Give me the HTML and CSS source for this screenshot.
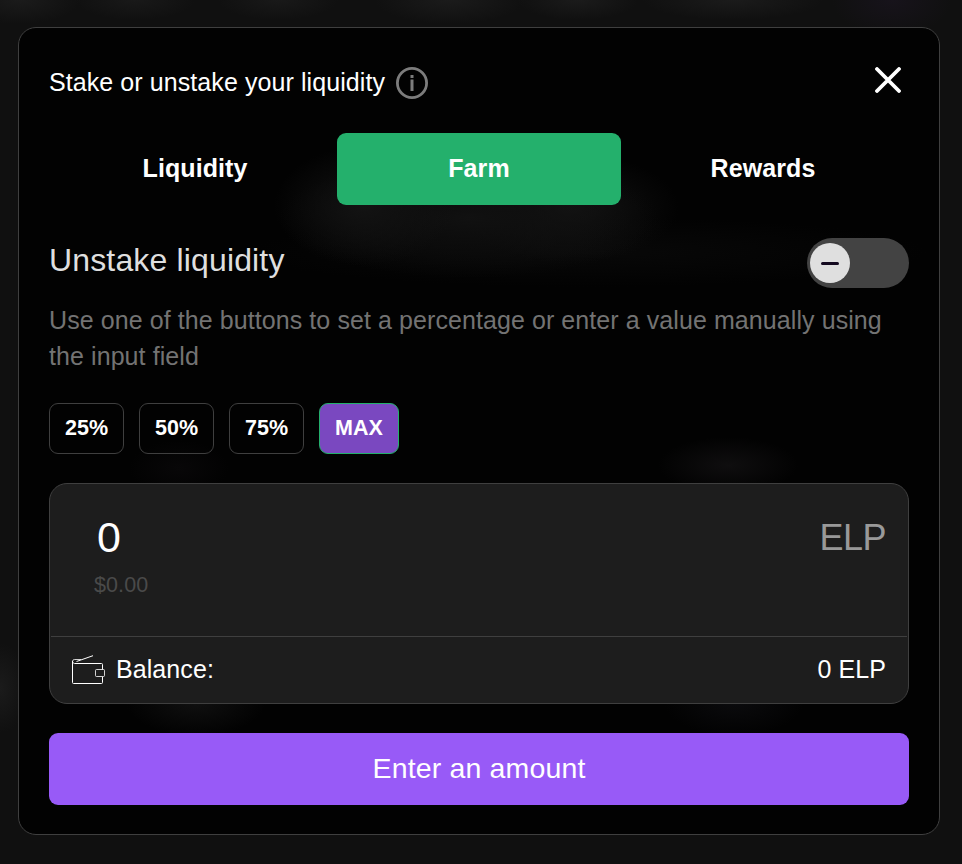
FILE: index.html
```html
<!DOCTYPE html>
<html lang="en">
<head>
  <meta charset="UTF-8" />
  <meta name="viewport" content="width=device-width, initial-scale=1.0"/>
  <title>Farm</title>
  <link rel="stylesheet" href="styles.css">
</head>
<body>

<div class="modal">
  <!-- Header -->
  <div class="modal-header">
    <h1>Stake or unstake your liquidity</h1>
    <svg class="info" width="32" height="32" viewBox="0 0 32 32">
      <circle cx="16" cy="16" r="14.6" fill="none" stroke="#7c7c7c" stroke-width="2.8"/>
      <path d="M14.5 8h3v3h-3zM14.5 12.5h3v11.5h-3z" fill="#7c7c7c"/>
    </svg>
    <button class="close" aria-label="Close">
      <svg width="26" height="26" viewBox="0 0 26 26">
        <path d="M2 2L24 24M24 2L2 24" stroke="#fff" stroke-width="3.8" stroke-linecap="round"/>
      </svg>
    </button>
  </div>

  <!-- Tabs -->
  <div class="tabs">
    <button class="tab">Liquidity</button>
    <button class="tab active">Farm</button>
    <button class="tab">Rewards</button>
  </div>

  <div class="action">
    <h2>Unstake liquidity</h2>
    <div class="toggle">
      <div class="knob"><span class="minus"></span></div>
    </div>
  </div>

  <p class="hint">Use one of the buttons to set a percentage or enter a value manually using the input field</p>

  <div class="percents">
    <button class="percent">25%</button>
    <button class="percent">50%</button>
    <button class="percent">75%</button>
    <button class="percent max">MAX</button>
  </div>

  <!-- Amount -->
  <div class="amount">
    <div class="amount-top">
      <div>
        <div class="value">0</div>
        <div class="usd">$0.00</div>
      </div>
      <div class="token">ELP</div>
    </div>
    <div class="balance">
      <svg class="wallet" width="34" height="30" viewBox="0 0 34 30" fill="none" stroke="#fff" stroke-width="1">
        <path d="M2.5 8.5H29.5Q30.5 8.5 30.5 9.5V14.5M30.5 22V27.5Q30.5 28.5 29.5 28.5H1.5Q.5 28.5 .5 27.5V6"/>
        <path d="M2.5 8.5Q.5 8 .5 6.5Q.5 4.5 2.5 4.5H9" opacity=".8"/>
        <path d="M4.5 6.5L21 .7"/>
        <path d="M24.5 14.500H31.500Q32.500 14.500 32.500 15.500V20.500Q32.500 21.500 31.500 21.500H24.500Q23.500 21.500 23.500 20.500V15.500Q23.500 14.500 24.500 14.500Z" opacity=".8"/>
      </svg>
      <span>Balance:</span>
      <span class="balance-value">0 ELP</span>
    </div>
  </div>

  <button class="submit">Enter an amount</button>
</div>

</body>
</html>
```
FILE: styles.css
```css
* {
  box-sizing: border-box;
}

body {
  margin: 0;
  height: 864px;
  padding: 27px 22px 0 18px;
  font-family: "Liberation Sans", Arial, sans-serif;
  font-size: 25px;
  letter-spacing: 0.08px;
  color: #fff;
  overflow: hidden;
  background:
    radial-gradient(ellipse 60px 24px at 20px 0, #1b1b1b, transparent),
    radial-gradient(ellipse 60px 20px at 135px 0, #191919, transparent),
    radial-gradient(ellipse 60px 20px at 278px 0, #191919, transparent),
    radial-gradient(ellipse 75px 24px at 450px 0, #1b1b1b, transparent),
    radial-gradient(ellipse 60px 20px at 578px 0, #1b1b1b, transparent),
    radial-gradient(ellipse 90px 20px at 733px 0, #1b1b1b, transparent),
    radial-gradient(ellipse 60px 36px at 892px 0, #17131b, transparent),
    radial-gradient(ellipse 28px 45px at 0 688px, #1b1b1b, transparent),
    #101010;
}

h1, h2, p {
  margin: 0;
  font-weight: normal;
}

button {
  padding: 0;
  border: none;
  background: none;
  color: #fff;
  font: inherit;
  letter-spacing: inherit;
}

svg {
  display: block;
}

.modal {
  height: 808px;
  padding: 30px;
  border: 1px solid #3f3f3f;
  border-radius: 18px;
  background:
    radial-gradient(ellipse 90px 60px at 345px 178px, #131313, transparent),
    radial-gradient(ellipse 190px 60px at 450px 190px, #111, transparent),
    radial-gradient(ellipse 110px 55px at 550px 180px, #131313, transparent),
    radial-gradient(ellipse 340px 35px at 570px 224px, #080808, transparent),
    radial-gradient(ellipse 70px 28px at 709px 437px, #0f0e0f, transparent),
    radial-gradient(ellipse 50px 28px at 160px 440px, #080708, transparent),
    radial-gradient(ellipse 70px 34px at 177px 674px, #101010, transparent),
    radial-gradient(ellipse 70px 34px at 715px 674px, #0b0b0d, transparent),
    #020202;
}

.modal-header {
  display: flex;
  align-items: center;
  height: 50px;
}

.modal-header h1 {
  padding-bottom: 1px;
  font-size: 25px;
}

.info {
  margin-left: 11px;
}

.close {
  margin: 0 8px 7px auto;
}

.tabs {
  display: grid;
  grid-template-columns: repeat(3, 284px);
  justify-content: center;
  margin-top: 25px;
}

.tab {
  height: 72px;
  padding-bottom: 2px;
  border-radius: 9px;
  font-weight: bold;
}

.tab.active {
  background: #24b06c;
}

.action {
  display: flex;
  justify-content: space-between;
  margin-top: 33px;
}

.action h2 {
  font-size: 32px;
  line-height: 44px;
  letter-spacing: 0.15px;
  color: #dfdfdf;
}

.toggle {
  width: 102px;
  height: 50px;
  padding: 5px 3px;
  border-radius: 25px;
  background: #434343;
}

.knob {
  display: flex;
  align-items: center;
  justify-content: center;
  width: 40px;
  height: 40px;
  border-radius: 50%;
  background: #dfdfdf;
}

.minus {
  width: 18px;
  height: 3px;
  border-radius: 2px;
  background: #140a20;
}

.hint {
  margin-top: 14px;
  line-height: 36px;
  color: #737373;
}

.percents {
  display: flex;
  gap: 15px;
  margin-top: 29px;
}

.percent {
  width: 75px;
  height: 51px;
  border: 1px solid #3f3f3f;
  border-radius: 9px;
  font-size: 21.5px;
  font-weight: bold;
  letter-spacing: 0;
}

.percent.max {
  width: 80px;
  border-color: #24b06c;
  background: #7a48c0;
}

.amount {
  height: 221px;
  margin-top: 29px;
  padding: 0 1px;
  border: 1px solid #3f3f3f;
  border-radius: 18px;
  background: #1d1d1d;
}

.amount-top {
  display: flex;
  justify-content: space-between;
  height: 153px;
  padding: 30px 21px 0 43px;
  border-bottom: 1px solid #3f3f3f;
}

.value {
  padding-left: 3px;
  font-size: 43px;
  line-height: 46px;
}

.usd {
  margin-top: 12px;
  font-size: 21.5px;
  line-height: 26px;
  color: #4a4a4a;
}

.token {
  font-size: 36px;
  line-height: 48px;
  letter-spacing: -0.5px;
  color: #999;
}

.balance {
  display: flex;
  align-items: center;
  height: 66px;
  padding: 0 21px 2px;
}

.wallet {
  margin: 2px 10px 0 0;
}

.balance-value {
  margin-left: auto;
}

.submit {
  display: block;
  width: 100%;
  height: 72px;
  margin-top: 29px;
  padding-bottom: 2px;
  border-radius: 9px;
  background: #985af7;
  font-size: 28.5px;
  letter-spacing: 0.15px;
}
```
